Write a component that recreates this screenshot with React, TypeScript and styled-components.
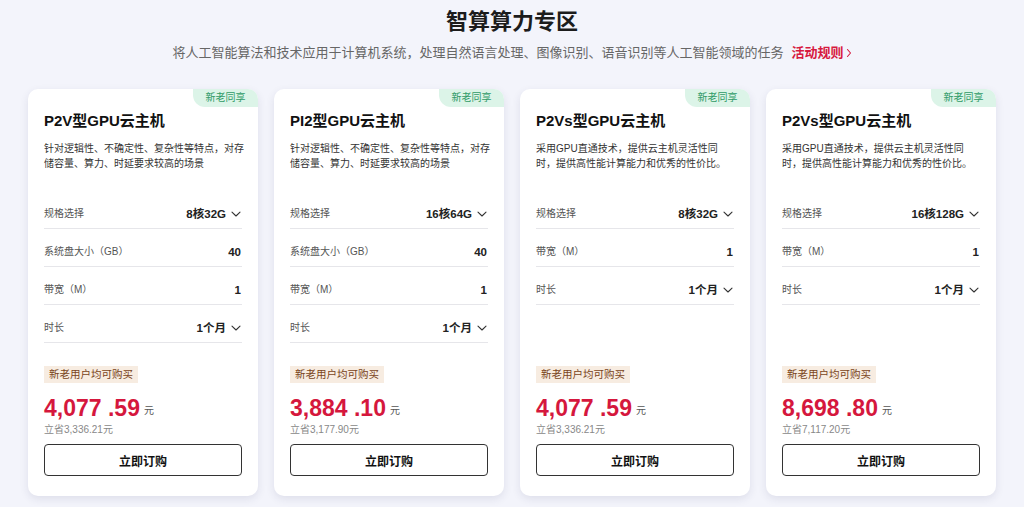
import * as React from 'react'
import styled, { createGlobalStyle } from 'styled-components'

// Types for one product card
type Row = {
    label: string
    value: string
    select?: boolean
}

type Product = {
    title: string
    desc: string[]
    rows: Row[]
    price: string
    save: string
}

const products: Product[] = [
    {
        title: 'P2V型GPU云主机',
        desc: ['针对逻辑性、不确定性、复杂性等特点，对存', '储容量、算力、时延要求较高的场景'],
        rows: [
            { label: '规格选择', value: '8核32G', select: true },
            { label: '系统盘大小（GB）', value: '40' },
            { label: '带宽（M）', value: '1' },
            { label: '时长', value: '1个月', select: true },
        ],
        price: '4,077 .59',
        save: '立省3,336.21元',
    },
    {
        title: 'PI2型GPU云主机',
        desc: ['针对逻辑性、不确定性、复杂性等特点，对存', '储容量、算力、时延要求较高的场景'],
        rows: [
            { label: '规格选择', value: '16核64G', select: true },
            { label: '系统盘大小（GB）', value: '40' },
            { label: '带宽（M）', value: '1' },
            { label: '时长', value: '1个月', select: true },
        ],
        price: '3,884 .10',
        save: '立省3,177.90元',
    },
    {
        title: 'P2Vs型GPU云主机',
        desc: ['采用GPU直通技术，提供云主机灵活性同', '时，提供高性能计算能力和优秀的性价比。'],
        rows: [
            { label: '规格选择', value: '8核32G', select: true },
            { label: '带宽（M）', value: '1' },
            { label: '时长', value: '1个月', select: true },
        ],
        price: '4,077 .59',
        save: '立省3,336.21元',
    },
    {
        title: 'P2Vs型GPU云主机',
        desc: ['采用GPU直通技术，提供云主机灵活性同', '时，提供高性能计算能力和优秀的性价比。'],
        rows: [
            { label: '规格选择', value: '16核128G', select: true },
            { label: '带宽（M）', value: '1' },
            { label: '时长', value: '1个月', select: true },
        ],
        price: '8,698 .80',
        save: '立省7,117.20元',
    },
]

const GlobalStyle = createGlobalStyle`
    body {
        margin: 0;
        background: #f3f4fb;
        font-family: "Liberation Sans", "Noto Sans CJK SC", sans-serif;
        color: #222;
    }
`

const Page = styled.div`
    display: flex;
    flex-direction: column;
    align-items: center;
    padding-top: 7px;
    height: 507px;
    box-sizing: border-box;
`

const Heading = styled.h1`
    margin: 0;
    font-size: 22px;
    line-height: 30px;
    font-weight: bold;
    color: #1c1c1c;
`

const Subtitle = styled.div`
    margin-top: 6px;
    display: flex;
    align-items: center;
    gap: 8px;
    font-size: 13px;
    line-height: 20px;
    color: #666;
`

const RuleLink = styled.span`
    display: flex;
    align-items: center;
    gap: 2px;
    color: #d7193f;
    font-weight: bold;
`

const Cards = styled.div`
    margin-top: 26px;
    display: grid;
    grid-template-columns: repeat(4, 230px);
    gap: 16px;
`

const Card = styled.div`
    position: relative;
    display: flex;
    flex-direction: column;
    background: #fff;
    border-radius: 10px;
    padding: 22px 16px 20px;
    box-shadow: 0 3px 8px rgba(40, 40, 90, 0.1);
    overflow: hidden;
`

const Badge = styled.div`
    position: absolute;
    top: 0;
    right: 0;
    width: 65px;
    height: 18px;
    background: #dcf4e8;
    color: #2f9a66;
    font-size: 10px;
    line-height: 18px;
    text-align: center;
    border-bottom-left-radius: 12px;
`

const CardTitle = styled.div`
    font-size: 15px;
    line-height: 20px;
    font-weight: bold;
    color: #111;
`

const Desc = styled.div`
    margin-top: 10px;
    font-size: 10px;
    line-height: 15px;
    color: #333;
    white-space: nowrap;
`

const Rows = styled.div`
    margin-top: 20px;
    display: flex;
    flex-direction: column;
`

const RowItem = styled.div`
    height: 38px;
    box-sizing: border-box;
    padding: 16px 1px 0 0;
    display: flex;
    justify-content: space-between;
    align-items: flex-start;
    border-bottom: 1px solid #e6e6ea;
`

const RowLabel = styled.span`
    font-size: 10px;
    line-height: 14px;
    color: #555;
`

const RowValue = styled.span`
    display: flex;
    align-items: center;
    gap: 5px;
    font-size: 11.5px;
    line-height: 14px;
    font-weight: bold;
    color: #222;
`

const Bottom = styled.div`
    margin-top: auto;
    padding-top: 23px;
    display: flex;
    flex-direction: column;
    align-items: flex-start;
`

const Tag = styled.div`
    height: 17px;
    padding: 0 5px;
    background: #f7ece1;
    color: #7a4420;
    font-size: 10.5px;
    line-height: 17px;
`

const PriceLine = styled.div`
    margin-top: 11px;
    height: 28px;
    display: flex;
    align-items: center;
    gap: 4px;
`

const Price = styled.span`
    font-size: 23px;
    line-height: 28px;
    font-weight: bold;
    color: #d5173d;
`

const Unit = styled.span`
    font-size: 10px;
    line-height: 14px;
    padding-top: 5px;
    color: #555;
`

const Save = styled.div`
    margin-top: 1px;
    font-size: 10px;
    line-height: 14px;
    color: #888;
`

const BuyButton = styled.button`
    margin-top: 7px;
    width: 100%;
    height: 32px;
    border: 1px solid #333;
    border-radius: 4px;
    background: #fff;
    font-family: inherit;
    font-size: 12px;
    font-weight: bold;
    color: #111;
    cursor: pointer;
`

const Chevron = ({ size = 10 }: { size?: number }) => (
    <svg width={size} height={size} viewBox="0 0 10 10" fill="none">
        <path d="M1 3.2 L5 7 L9 3.2" stroke="#333" strokeWidth="1.1" strokeLinecap="round" strokeLinejoin="round" />
    </svg>
)

const RightArrow = () => (
    <svg width="6" height="10" viewBox="0 0 6 10" fill="none">
        <path d="M1.5 1.5 L4.5 5 L1.5 8.5" stroke="#d7193f" strokeWidth="1.1" strokeLinecap="round" strokeLinejoin="round" />
    </svg>
)

const ProductCard: React.FC<{ product: Product }> = ({ product }) => (
    <Card>
        <Badge>新老同享</Badge>
        <CardTitle>{product.title}</CardTitle>
        <Desc>
            {product.desc.map(line => (
                <div key={line}>{line}</div>
            ))}
        </Desc>
        <Rows>
            {product.rows.map(row => (
                <RowItem key={row.label}>
                    <RowLabel>{row.label}</RowLabel>
                    <RowValue>
                        {row.value}
                        {row.select && <Chevron />}
                    </RowValue>
                </RowItem>
            ))}
        </Rows>
        <Bottom>
            <Tag>新老用户均可购买</Tag>
            <PriceLine>
                <Price>{product.price}</Price>
                <Unit>元</Unit>
            </PriceLine>
            <Save>{product.save}</Save>
            <BuyButton>立即订购</BuyButton>
        </Bottom>
    </Card>
)

export default function App() {
    return (
        <>
            <GlobalStyle />
            <Page>
                <Heading>智算算力专区</Heading>
                <Subtitle>
                    将人工智能算法和技术应用于计算机系统，处理自然语言处理、图像识别、语音识别等人工智能领域的任务
                    <RuleLink>
                        活动规则
                        <RightArrow />
                    </RuleLink>
                </Subtitle>
                <Cards>
                    {products.map((p, i) => (
                        <ProductCard key={i} product={p} />
                    ))}
                </Cards>
            </Page>
        </>
    )
}
